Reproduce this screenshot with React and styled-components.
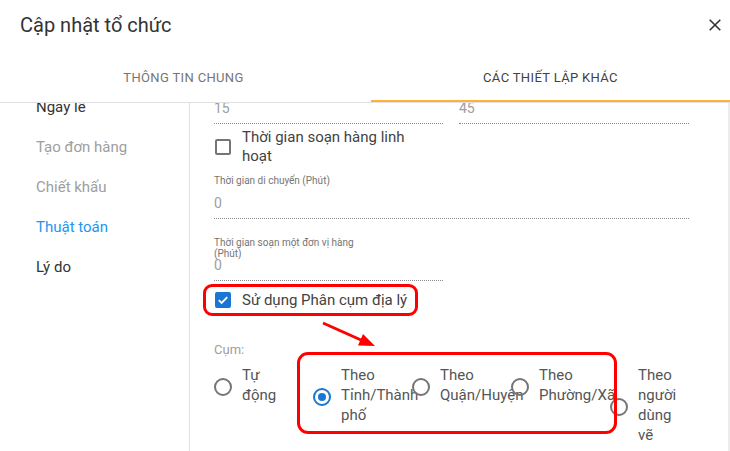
import React from "react";
import styled, { createGlobalStyle } from "styled-components";

const GlobalStyle = createGlobalStyle`
  html, body {
    margin: 0;
    padding: 0;
    background: #ffffff;
  }
  body {
    font-family: Roboto, "Noto Sans", "Liberation Sans", sans-serif;
  }
  * {
    box-sizing: border-box;
  }
`;

const Dialog = styled.div`
  width: 730px;
  height: 451px;
  overflow: hidden;
  background: #ffffff;
  display: flex;
  flex-direction: column;
`;

const Header = styled.div`
  display: flex;
  justify-content: space-between;
  align-items: flex-start;
  height: 54px;
  flex: none;
  padding: 11px 8px 0 20px;
`;

const Title = styled.h2`
  margin: 0;
  font-size: 20px;
  line-height: 28px;
  font-weight: 400;
  color: #333333;
`;

const CloseButton = styled.button`
  border: 0;
  background: none;
  padding: 0;
  width: 14px;
  height: 28px;
  display: flex;
  align-items: center;
  justify-content: center;
  color: #333333;
  cursor: pointer;
`;

const TabBar = styled.div`
  display: flex;
  height: 49px;
  flex: none;
  border-bottom: 1px solid #e0e0e0;
`;

const Tab = styled.div`
  flex: ${(p) => (p.$width ? `0 0 ${p.$width}px` : "1")};
  height: 48px;
  display: flex;
  align-items: center;
  justify-content: center;
  padding-right: ${(p) => (p.$width ? "4px" : "0")};
  font-size: 13px;
  letter-spacing: 0.35px;
  text-transform: uppercase;
  color: ${(p) => (p.$active ? "#424242" : "#757575")};
  border-bottom: 2px solid ${(p) => (p.$active ? "#ffb13b" : "transparent")};
`;

const Body = styled.div`
  position: relative;
  flex: 1;
  display: flex;
  overflow: hidden;
`;

const Nav = styled.nav`
  flex: 0 0 190px;
  margin-top: -16px;
  border-right: 1px solid #e0e0e0;
`;

const NavItem = styled.div`
  height: 40px;
  padding: 10px 0 0 36px;
  font-size: 15px;
  line-height: 20px;
  color: ${(p) => p.$color};
`;

const Form = styled.div`
  flex: 1;
  min-width: 0;
  margin-top: -4.5px;
  padding: 0 39px 0 24px;
`;

const Scrollbar = styled.div`
  flex: 0 0 2px;
  background: #ececec;
`;

const Row = styled.div`
  display: grid;
  grid-template-columns: 229px 230px;
  column-gap: 16px;
`;

const Field = styled.div`
  width: ${(p) => (p.$half ? "229px" : "100%")};
  margin-top: ${(p) => p.$mt || 0}px;
`;

const FieldLabel = styled.div`
  max-width: 165px;
  font-size: 10px;
  line-height: 11px;
  height: 11px;
  white-space: ${(p) => (p.$wrap ? "normal" : "nowrap")};
  color: #757575;
`;

const Input = styled.div`
  margin-top: ${(p) => (p.$labelled ? "8px" : "0")};
  font-size: 14px;
  line-height: 19px;
  padding-bottom: 5px;
  border-bottom: 1px dotted #8a8a8a;
  color: #9e9e9e;
`;

const CheckRow = styled.label`
  display: flex;
  align-items: center;
  gap: 11px;
  margin-top: ${(p) => p.$mt}px;
`;

const Box = styled.span`
  flex: none;
  width: 16px;
  height: 16px;
  margin-left: 1px;
  border-radius: 2px;
  border: 2px solid ${(p) => (p.$checked ? "#1976d2" : "#757575")};
  background: ${(p) => (p.$checked ? "#1976d2" : "transparent")};
  display: flex;
  align-items: center;
  justify-content: center;
`;

const CheckLabel = styled.span`
  font-size: 15px;
  line-height: ${(p) => p.$lh}px;
  color: #424242;
  max-width: 195px;
`;

const GroupLabel = styled.div`
  margin-top: 32px;
  font-size: 13px;
  line-height: 16px;
  color: #9e9e9e;
`;

const RadioGroup = styled.div`
  display: flex;
  align-items: flex-start;
  margin-top: 7px;
`;

const RadioItem = styled.label`
  flex: 0 0 99px;
  display: flex;
  align-items: center;
  gap: 10px;
`;

const RadioCircle = styled.span`
  flex: none;
  width: 18px;
  height: 18px;
  margin-top: 3px;
  border-radius: 50%;
  border: 2px solid ${(p) => (p.$checked ? "#1976d2" : "#757575")};
  display: flex;
  align-items: center;
  justify-content: center;

  &::after {
    content: "";
    width: 8px;
    height: 8px;
    border-radius: 50%;
    background: ${(p) => (p.$checked ? "#1976d2" : "transparent")};
  }
`;

const RadioLabel = styled.span`
  flex: 0 0 48px;
  width: 48px;
  font-size: 15px;
  line-height: 20px;
  color: #555555;
`;

const Highlight = styled.div`
  position: absolute;
  left: ${(p) => p.$left}px;
  top: ${(p) => p.$top}px;
  width: ${(p) => p.$w}px;
  height: ${(p) => p.$h}px;
  border: 3px solid #ff0000;
  border-radius: ${(p) => p.$r}px;
  pointer-events: none;
`;

const Arrow = styled.svg`
  position: absolute;
  left: 318px;
  top: 215px;
`;

const navItems = [
  { label: "Ngày lễ", color: "#333333" },
  { label: "Tạo đơn hàng", color: "#9e9e9e" },
  { label: "Chiết khấu", color: "#9e9e9e" },
  { label: "Thuật toán", color: "#2196f3" },
  { label: "Lý do", color: "#333333" },
];

const radios = [
  { label: "Tự động" },
  { label: "Theo Tỉnh/Thành phố", checked: true },
  { label: "Theo Quận/Huyện" },
  { label: "Theo Phường/Xã" },
  { label: "Theo người dùng vẽ" },
];

function CheckMark() {
  return (
    <svg width="12" height="12" viewBox="0 0 12 12">
      <path d="M1.8 6.2 L4.6 9 L10.3 3.2" fill="none" stroke="#fff" strokeWidth="1.8" />
    </svg>
  );
}

export default function App() {
  return (
    <>
      <GlobalStyle />
      <Dialog>
        <Header>
          <Title>Cập nhật tổ chức</Title>
          <CloseButton aria-label="close">
            <svg width="12" height="12" viewBox="0 0 12 12">
              <path d="M0.7 0.7 L11.3 11.3 M11.3 0.7 L0.7 11.3" stroke="currentColor" strokeWidth="1.6" />
            </svg>
          </CloseButton>
        </Header>

        <TabBar>
          <Tab $width={371}>Thông tin chung</Tab>
          <Tab $active>Các thiết lập khác</Tab>
        </TabBar>

        <Body>
          <Nav>
            {navItems.map((item) => (
              <NavItem key={item.label} $color={item.color}>
                {item.label}
              </NavItem>
            ))}
          </Nav>

          <Form>
            <Row>
              <Input>15</Input>
              <Input>45</Input>
            </Row>

            <CheckRow $mt={4.5}>
              <Box />
              <CheckLabel $lh={19}>Thời gian soạn hàng linh hoạt</CheckLabel>
            </CheckRow>

            <Field $mt={9}>
              <FieldLabel>Thời gian di chuyển (Phút)</FieldLabel>
              <Input $labelled>0</Input>
            </Field>

            <Field $half $mt={18}>
              <FieldLabel $wrap>Thời gian soạn một đơn vị hàng (Phút)</FieldLabel>
              <Input $labelled>0</Input>
            </Field>

            <CheckRow $mt={9}>
              <Box $checked>
                <CheckMark />
              </Box>
              <CheckLabel $lh={20}>Sử dụng Phân cụm địa lý</CheckLabel>
            </CheckRow>

            <GroupLabel>Cụm:</GroupLabel>
            <RadioGroup>
              {radios.map((r) => (
                <RadioItem key={r.label}>
                  <RadioCircle $checked={r.checked} />
                  <RadioLabel>{r.label}</RadioLabel>
                </RadioItem>
              ))}
            </RadioGroup>
          </Form>

          <Scrollbar />

          <Highlight $left={203} $top={181} $w={215} $h={32} $r={9} />
          <Highlight $left={297} $top={249} $w={320} $h={82} $r={11} />
          <Arrow width="62" height="36" viewBox="0 0 62 36">
            <path d="M5 5 L43 22" stroke="#ff0000" strokeWidth="3" />
            <polygon points="57,28 40,27.5 45,16" fill="#ff0000" />
          </Arrow>
        </Body>
      </Dialog>
    </>
  );
}
